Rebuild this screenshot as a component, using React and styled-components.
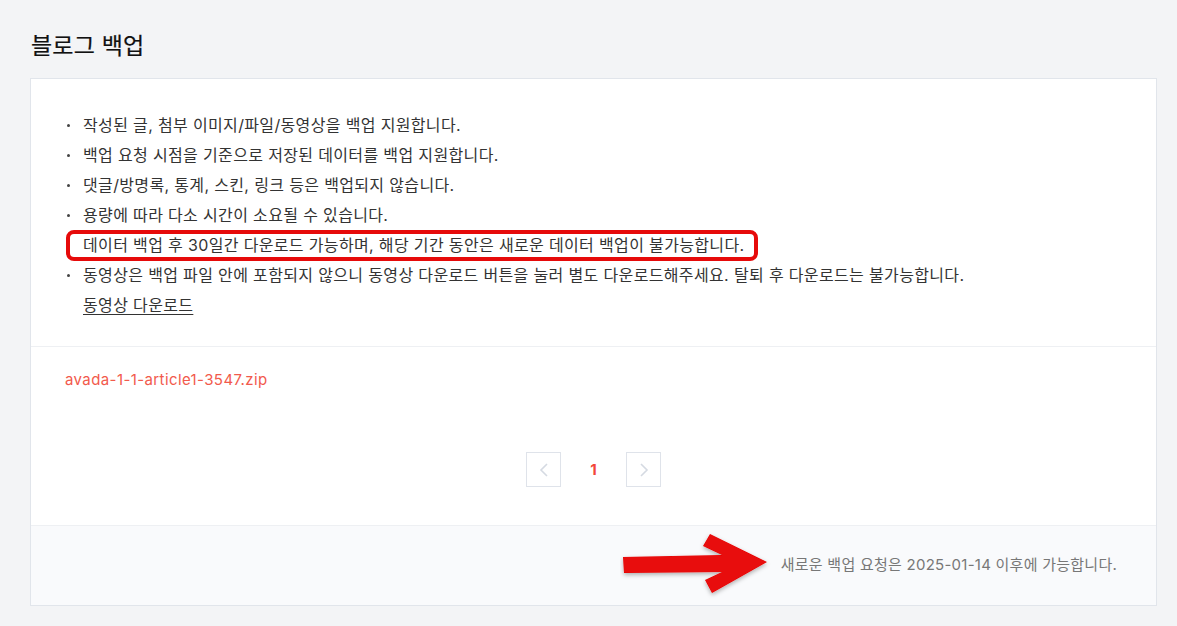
import React from 'react';
import styled, { createGlobalStyle } from 'styled-components';

const GlobalStyle = createGlobalStyle`
  html, body {
    margin: 0;
    padding: 0;
    background: #f3f4f6;
  }
  body {
    font-family: "Inter", "Noto Sans CJK KR", "Noto Sans", sans-serif;
    color: #333;
  }
`;

const notices = [
  '작성된 글, 첨부 이미지/파일/동영상을 백업 지원합니다.',
  '백업 요청 시점을 기준으로 저장된 데이터를 백업 지원합니다.',
  '댓글/방명록, 통계, 스킨, 링크 등은 백업되지 않습니다.',
  '용량에 따라 다소 시간이 소요될 수 있습니다.',
];

function App() {
  return (
    <>
      <GlobalStyle />
      <Page>
        <Title>블로그 백업</Title>
        <Card>
          <NoticeSection>
            <NoticeList>
              {notices.map((text) => (
                <NoticeItem key={text}>{text}</NoticeItem>
              ))}
              <NoticeItem $hideBullet>
                <Highlight>
                  데이터 백업 후 30일간 다운로드 가능하며, 해당 기간 동안은 새로운 데이터 백업이 불가능합니다.
                  <Mark />
                </Highlight>
              </NoticeItem>
              <NoticeItem>
                동영상은 백업 파일 안에 포함되지 않으니 동영상 다운로드 버튼을 눌러 별도 다운로드해주세요. 탈퇴 후 다운로드는 불가능합니다.
                <br />
                <VideoLink href="#">동영상 다운로드</VideoLink>
              </NoticeItem>
            </NoticeList>
          </NoticeSection>

          <FileSection>
            <FileName href="#">avada-1-1-article1-3547.zip</FileName>
            <Pager>
              <PageArrow aria-label="이전">
                <Chevron dir="left" />
              </PageArrow>
              <PageNum>1</PageNum>
              <PageArrow aria-label="다음">
                <Chevron dir="right" />
              </PageArrow>
            </Pager>
          </FileSection>

          <Footer>
            <ArrowMark />
            <FooterText>새로운 백업 요청은 2025-01-14 이후에 가능합니다.</FooterText>
          </Footer>
        </Card>
      </Page>
    </>
  );
}

function Chevron({ dir }) {
  return (
    <svg width="10" height="16" viewBox="0 0 10 16" fill="none">
      <path
        d={dir === 'left' ? 'M8 2 L2 8 L8 14' : 'M2 2 L8 8 L2 14'}
        stroke="#d5dae2"
        strokeWidth="1.6"
      />
    </svg>
  );
}

function ArrowMark() {
  return (
    <ArrowSvg width="160" height="70" viewBox="0 0 160 70">
      <defs>
        <filter id="shadow" x="-10%" y="-20%" width="130%" height="150%">
          <feDropShadow dx="0" dy="2" stdDeviation="2" floodColor="#000" floodOpacity="0.3" />
        </filter>
      </defs>
      <polygon
        points="3,25 102,23 83,14 90,2 147,30 92,61 85,48 102,40 4,41"
        fill="#e80707"
        filter="url(#shadow)"
      />
    </ArrowSvg>
  );
}

export default App;

const Page = styled.div`
  padding: 30px 20px 20px 30px;
`;

const Title = styled.h1`
  margin: 0 0 16px 1px;
  font-size: 23px;
  line-height: 32px;
  font-weight: 400;
  color: #111;
  letter-spacing: 0.2px;
  -webkit-text-stroke: 0.2px #111;
`;

const Card = styled.div`
  background: #fff;
  border: 1px solid #e1e5eb;
`;

const NoticeSection = styled.div`
  padding: 31px 30px 26px 52px;
  border-bottom: 1px solid #eef0f3;
`;

const NoticeList = styled.ul`
  margin: 0;
  padding: 0;
  list-style: none;
`;

const NoticeItem = styled.li`
  position: relative;
  font-size: 16px;
  line-height: 30px;
  letter-spacing: 0.35px;
  color: #333;

  &::before {
    content: '';
    display: ${(p) => (p.$hideBullet ? 'none' : 'block')};
    position: absolute;
    left: -16px;
    top: 14px;
    width: 3px;
    height: 3px;
    border-radius: 50%;
    background: #444;
  }
`;

const Highlight = styled.span`
  position: relative;
  display: inline-block;
`;

const Mark = styled.span`
  position: absolute;
  left: -17px;
  right: -14px;
  top: 0;
  bottom: -1px;
  border: 4px solid #e60a0a;
  border-radius: 8px;
  pointer-events: none;
`;

const VideoLink = styled.a`
  color: #333;
  text-decoration: underline;
  text-underline-offset: 3px;
`;

const FileSection = styled.div`
  padding: 23px 34px 38px;
  display: flex;
  flex-direction: column;
  gap: 62px;
  border-bottom: 1px solid #eef0f3;
`;

const FileName = styled.a`
  align-self: flex-start;
  font-size: 15px;
  line-height: 20px;
  letter-spacing: 0.4px;
  color: #f25a4c;
  text-decoration: none;
`;

const Pager = styled.div`
  display: flex;
  justify-content: center;
  align-items: center;
`;

const PageArrow = styled.button`
  width: 35px;
  height: 35px;
  padding: 0;
  background: #fff;
  border: 1px solid #dfe3ea;
  display: flex;
  align-items: center;
  justify-content: center;
`;

const PageNum = styled.span`
  width: 65px;
  text-align: center;
  font-size: 15px;
  font-weight: 700;
  color: #f2473a;
`;

const Footer = styled.div`
  position: relative;
  height: 79px;
  background: #f9fafc;
  display: flex;
  align-items: center;
  justify-content: flex-end;
  padding: 0 39px 0 0;
`;

const FooterText = styled.span`
  font-size: 15px;
  letter-spacing: 0.25px;
  color: #777;
  margin-bottom: 4px;
`;

const ArrowSvg = styled.svg`
  position: absolute;
  left: 589px;
  top: 6px;
`;
